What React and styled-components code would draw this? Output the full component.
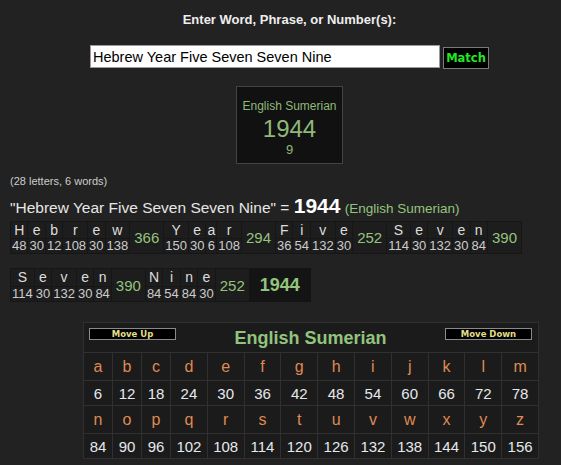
import React from "react";
import styled, { createGlobalStyle } from "styled-components";

const GlobalStyle = createGlobalStyle`
  body {
    margin: 0;
    background: #222222;
    font-family: "Liberation Sans", Arial, sans-serif;
  }
`;

const GREEN = "#93c47d";

const val = (c) => (c.toLowerCase().charCodeAt(0) - 96) * 6;
const sum = (w) => w.split("").reduce((a, c) => a + val(c), 0);

const lines = [
  ["Hebrew", "Year", "Five", "Seven"],
  ["Seven", "Nine"],
];

const alphabet = "abcdefghijklmnopqrstuvwxyz".split("");

const Page = styled.div`
  padding-top: 12px;
  color: #e6e6e6;
`;

const Header = styled.div`
  padding-left: 18px;
  display: flex;
  flex-direction: column;
  align-items: center;
`;

const Heading = styled.div`
  font-weight: bold;
  font-size: 13px;
  line-height: 16px;
  color: #eeeeee;
`;

const InputRow = styled.div`
  margin-top: 17px;
  display: flex;
  align-items: flex-start;
  gap: 3px;
`;

const TextInput = styled.input`
  box-sizing: border-box;
  width: 350px;
  height: 23px;
  border: 1px solid #9a9a9a;
  background: #ffffff;
  color: #000000;
  font-family: "Liberation Sans", Arial, sans-serif;
  font-size: 14.5px;
  padding: 0 2px;
  outline: none;
`;

const MatchButton = styled.div`
  box-sizing: border-box;
  margin-top: 2px;
  width: 46px;
  height: 22px;
  background: #000000;
  border: 1px solid #7a7a7a;
  color: #22e622;
  font-family: "DejaVu Sans", Verdana, sans-serif;
  font-weight: bold;
  font-size: 11.5px;
  display: flex;
  align-items: center;
  justify-content: center;
`;

const ResultBox = styled.div`
  box-sizing: border-box;
  margin-top: 17px;
  width: 107px;
  height: 78px;
  background: #111111;
  border: 1px solid #444444;
  padding-top: 12px;
  text-align: center;
  color: #8fb87a;
`;

const ResultLabel = styled.div`
  font-size: 12px;
  line-height: 14px;
`;

const ResultValue = styled.div`
  margin-top: 3px;
  font-size: 24px;
  line-height: 26px;
`;

const ResultReduced = styled.div`
  font-size: 13px;
  line-height: 15px;
`;

const Counts = styled.div`
  margin-top: 11px;
  padding-left: 10px;
  font-size: 11px;
  line-height: 13px;
  color: #cccccc;
`;

const Summary = styled.div`
  margin-top: 10px;
  padding-left: 10px;
  font-size: 15.5px;
  line-height: 20px;
  color: #e6e6e6;
  white-space: nowrap;
`;

const SummaryTotal = styled.span`
  font-weight: bold;
  font-size: 21px;
  line-height: 16px;
  color: #ffffff;
`;

const SummaryCipher = styled.span`
  font-size: 13.5px;
  line-height: 16px;
  color: ${GREEN};
`;

const Breakdown = styled.div`
  margin-top: 3px;
  padding-left: 10px;
  display: flex;
  flex-direction: column;
  gap: 14px;
`;

const BreakdownLine = styled.div`
  display: flex;
  align-items: stretch;
`;

const WordTable = styled.table`
  border-collapse: separate;
  border-spacing: 1px;
  background: #161616;
  & + & {
    margin-left: -1px;
  }
`;

const LetterCell = styled.td`
  background: #1d1d1d;
  padding: 0 1px;
  height: 16px;
  font-size: 14px;
  line-height: 16px;
  color: #dddddd;
  text-align: center;
`;

const NumberCell = styled.td`
  background: #1d1d1d;
  padding: 0 1px;
  height: 14px;
  font-size: 13px;
  line-height: 14px;
  color: #cccccc;
  text-align: center;
`;

const SumCell = styled.td`
  background: #1d1d1d;
  padding: 0 4px;
  font-size: 15px;
  color: ${GREEN};
  text-align: center;
  vertical-align: middle;
`;

const TotalCell = styled.div`
  margin-left: -1px;
  background: #141414;
  height: 34px;
  padding: 0 11px;
  display: flex;
  align-items: center;
  font-weight: bold;
  font-size: 18px;
  color: ${GREEN};
`;

const Chart = styled.div`
  box-sizing: border-box;
  margin: 20px 0 0 83px;
  width: 456px;
  display: grid;
  grid-template-columns: 28px 28px 28px repeat(10, 1fr);
  grid-template-rows: 29px 27px 24px 27px 24px;
  gap: 1px;
  padding: 1px;
  background: #303030;
`;

const TitleCell = styled.div`
  grid-column: 1 / -1;
  background: #1b1b1b;
  display: flex;
  justify-content: space-between;
  align-items: flex-start;
  padding: 4px 6px 0 5px;
`;

const MoveButton = styled.div`
  box-sizing: border-box;
  margin-top: 1px;
  width: 87px;
  height: 12px;
  background: #000000;
  border: 1px solid #8a8a8a;
  color: #e4df86;
  font-family: "DejaVu Sans", Verdana, sans-serif;
  font-weight: bold;
  font-size: 8.5px;
  line-height: 10px;
  text-align: center;
`;

const ChartTitle = styled.div`
  font-weight: bold;
  font-size: 18px;
  line-height: 22px;
  color: ${GREEN};
`;

const ChartCell = styled.div`
  background: #1b1b1b;
  display: flex;
  align-items: center;
  justify-content: center;
  font-size: ${(p) => (p.$letter ? "16px" : "15px")};
  color: ${(p) => (p.$letter ? "#df8a52" : "#e6e8ec")};
`;

function Word({ word }) {
  const chars = word.split("");
  return (
    <WordTable>
      <tbody>
        <tr>
          {chars.map((c, i) => (
            <LetterCell key={i}>{c}</LetterCell>
          ))}
          <SumCell rowSpan={2}>{sum(word)}</SumCell>
        </tr>
        <tr>
          {chars.map((c, i) => (
            <NumberCell key={i}>{val(c)}</NumberCell>
          ))}
        </tr>
      </tbody>
    </WordTable>
  );
}

export default function App() {
  const rows = [alphabet.slice(0, 13), alphabet.slice(13)];
  return (
    <Page>
      <GlobalStyle />
      <Header>
        <Heading>Enter Word, Phrase, or Number(s):</Heading>
        <InputRow>
          <TextInput defaultValue="Hebrew Year Five Seven Seven Nine" />
          <MatchButton>Match</MatchButton>
        </InputRow>
        <ResultBox>
          <ResultLabel>English Sumerian</ResultLabel>
          <ResultValue>1944</ResultValue>
          <ResultReduced>9</ResultReduced>
        </ResultBox>
      </Header>
      <Counts>(28 letters, 6 words)</Counts>
      <Summary>
        "Hebrew Year Five Seven Seven Nine" = <SummaryTotal>1944</SummaryTotal>{" "}
        <SummaryCipher>(English Sumerian)</SummaryCipher>
      </Summary>
      <Breakdown>
        {lines.map((line, li) => (
          <BreakdownLine key={li}>
            {line.map((w, wi) => (
              <Word key={wi} word={w} />
            ))}
            {li === lines.length - 1 && <TotalCell>1944</TotalCell>}
          </BreakdownLine>
        ))}
      </Breakdown>
      <Chart>
        <TitleCell>
          <MoveButton>Move Up</MoveButton>
          <ChartTitle>English Sumerian</ChartTitle>
          <MoveButton>Move Down</MoveButton>
        </TitleCell>
        {rows.map((r, ri) => (
          <React.Fragment key={ri}>
            {r.map((c) => (
              <ChartCell key={c} $letter>
                {c}
              </ChartCell>
            ))}
            {r.map((c) => (
              <ChartCell key={c + "n"}>{val(c)}</ChartCell>
            ))}
          </React.Fragment>
        ))}
      </Chart>
    </Page>
  );
}
